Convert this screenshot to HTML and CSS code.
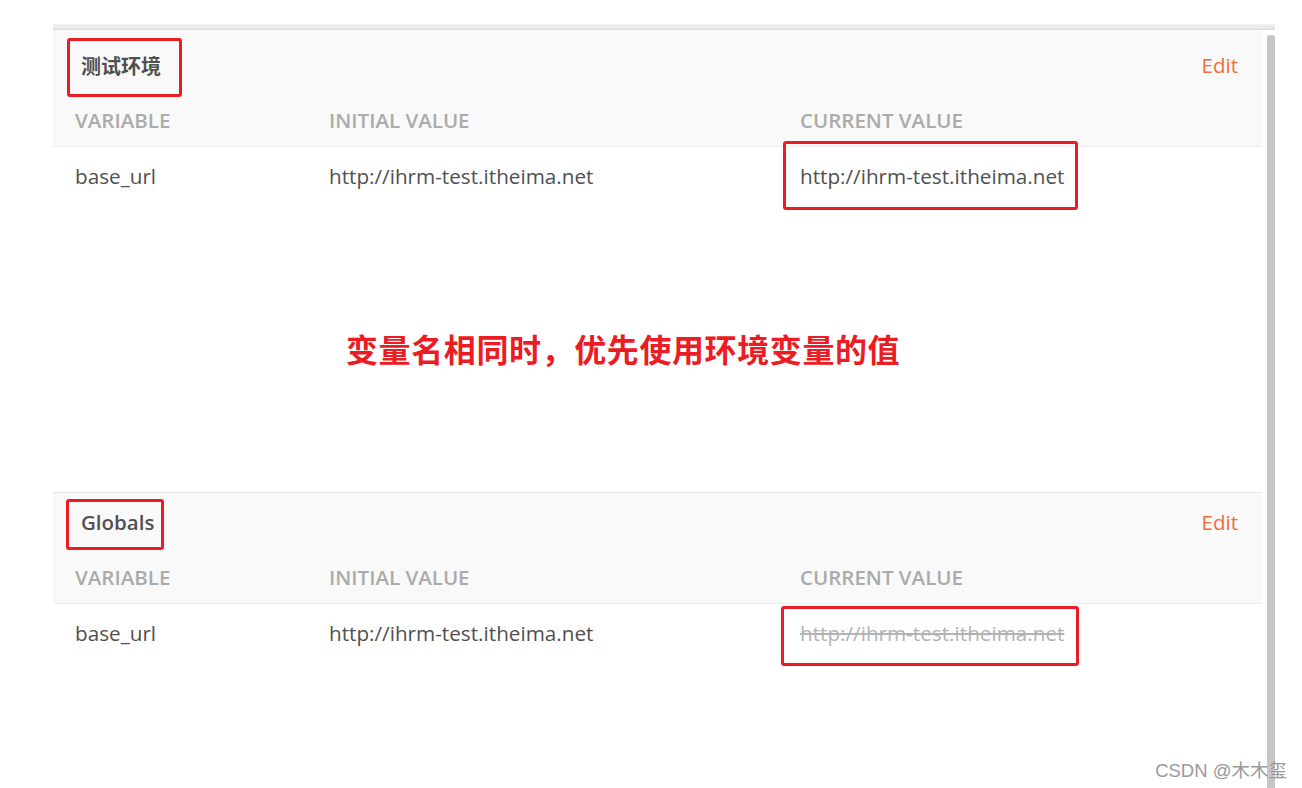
FILE: index.html
```html
<!DOCTYPE html>
<html lang="zh-CN">
<head>
    <meta charset="UTF-8">
    <title>Environment variables</title>
    <link rel="stylesheet" href="styles.css">
</head>
<body>
    <div class="page">
        <div class="topbar"></div>
        <div class="frame">
            <div class="panel">
                <!-- environment -->
                <div class="env first">
                    <div class="env-head">
                        <span class="env-title cjk">测试环境</span>
                        <a class="edit">Edit</a>
                    </div>
                    <div class="grid cols">
                        <span>VARIABLE</span>
                        <span>INITIAL VALUE</span>
                        <span>CURRENT VALUE</span>
                    </div>
                    <div class="grid row">
                        <span>base_url</span>
                        <span>http://ihrm-test.itheima.net</span>
                        <span>http://ihrm-test.itheima.net</span>
                    </div>
                    <div class="note">变量名相同时，优先使用环境变量的值</div>
                </div>

                <!-- globals -->
                <div class="env globals">
                    <div class="env-head">
                        <span class="env-title">Globals</span>
                        <a class="edit">Edit</a>
                    </div>
                    <div class="grid cols">
                        <span>VARIABLE</span>
                        <span>INITIAL VALUE</span>
                        <span>CURRENT VALUE</span>
                    </div>
                    <div class="grid row">
                        <span>base_url</span>
                        <span>http://ihrm-test.itheima.net</span>
                        <span class="overridden">http://ihrm-test.itheima.net</span>
                    </div>
                </div>
            </div>
            <div class="scrollbar"></div>
        </div>

        <!-- red annotation boxes -->
        <div class="mark m1"></div>
        <div class="mark m2"></div>
        <div class="mark m3"></div>
        <div class="mark m4"></div>

        <div class="watermark">CSDN @木木玺</div>
    </div>
</body>
</html>
```

FILE: styles.css
```css
body {
    margin: 0;
    padding: 0;
    background-color: #fff;
    font-family: "Open Sans", "Noto Sans CJK SC", sans-serif;
    overflow: hidden;
}
.page {
    position: relative;
    width: 1302px;
    height: 788px;
    overflow: hidden;
}
.topbar {
    margin: 24px 27px 0 53px;
    height: 5px;
    background: linear-gradient(#f3f3f3, #e6e6e6);
    border-bottom: 1px solid #dcdcdc;
}
.frame {
    display: flex;
    height: 758px;
}
.panel {
    width: 1209px;
    margin-left: 53px;
    background-color: #fff;
}
.scrollbar {
    width: 8px;
    margin: 5px 0 0 5px;
    background-color: #c6c6c6;
    border-radius: 3px 3px 0 0;
}
.env {
    background-color: #fff;
}
.env.first {
    height: 462px;
}
.env.first .env-head {
    padding-top: 6px;
}
.env.globals {
    border-top: 1px solid #e6e6e6;
}
.env-head {
    display: flex;
    justify-content: space-between;
    align-items: center;
    height: 58px;
    padding: 0 24px 0 28px;
    background-color: #f9f9f9;
}
.env-title {
    font-size: 20.5px;
    font-weight: 600;
    color: #505050;
}
.env-title.cjk {
    font-family: "Noto Sans CJK SC", sans-serif;
    font-size: 20px;
    font-weight: 700;
}
.edit {
    font-size: 20.5px;
    color: #f26b3a;
    cursor: pointer;
}
.grid {
    display: grid;
    grid-template-columns: 254px 471px 1fr;
    align-items: center;
    padding-left: 22px;
}
.cols {
    height: 52px;
    background-color: #f9f9f9;
    border-bottom: 1px solid #ececec;
    font-size: 20.5px;
    font-weight: 600;
    color: #ababab;
}
.row {
    height: 57px;
    font-size: 20.7px;
    color: #505050;
}
.overridden {
    color: #b3b3b3;
    text-decoration: line-through;
}
.note {
    margin-top: 121px;
    padding-left: 293px;
    font-family: "Noto Sans CJK SC", sans-serif;
    font-size: 32px;
    font-weight: 700;
    color: #ec1c24;
    letter-spacing: 0.6px;
}
/* annotation boxes */
.mark {
    position: absolute;
    border: 3px solid #ec1c24;
    border-radius: 3px;
    box-sizing: border-box;
}
.m1 { left: 67px; top: 38px; width: 115px; height: 59px; }
.m2 { left: 783px; top: 141px; width: 295px; height: 69px; }
.m3 { left: 66px; top: 499px; width: 98px; height: 51px; }
.m4 { left: 781px; top: 606px; width: 298px; height: 60px; }
.watermark {
    position: absolute;
    right: 15px;
    top: 756px;
    font-family: "Liberation Sans", "Noto Sans CJK SC", sans-serif;
    font-size: 18.5px;
    color: #9a9a9a;
}
```
